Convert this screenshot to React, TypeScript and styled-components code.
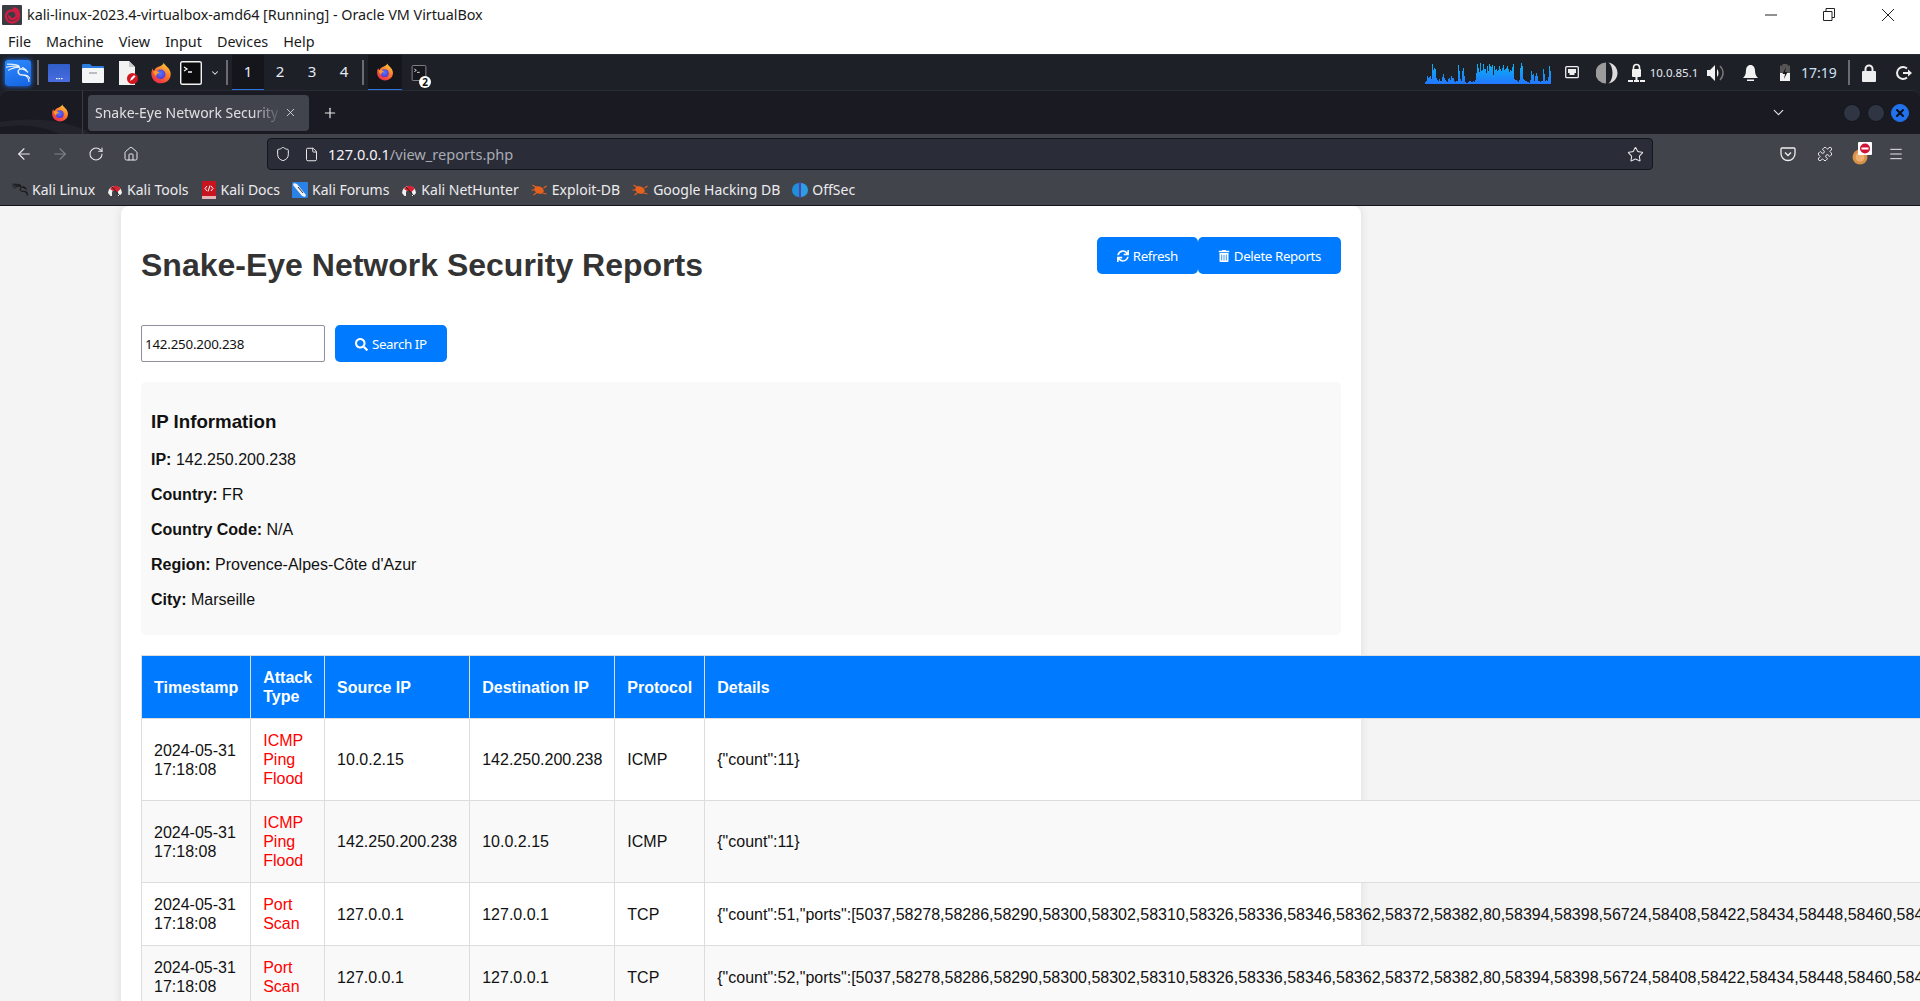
import React, { useId } from "react";
import styled, { createGlobalStyle } from "styled-components";
import { SiKalilinux } from "react-icons/si";
import { FaSync, FaTrashAlt, FaSearch } from "react-icons/fa";
import { ArrowLeft, ArrowRight, RotateCw, Home, Shield, File, Star, Puzzle, ChevronDown, Plus, X, Menu as MenuIcon } from "lucide-react";

const Global = createGlobalStyle`
  html, body { margin: 0; padding: 0; background: #f4f4f4; }
  * { box-sizing: border-box; }
`;

const uiFont = `"Noto Sans", "Open Sans", sans-serif`;
const pageFont = `"Liberation Sans", Arial, sans-serif`;

const Screen = styled.div`
  width: 1920px; height: 1001px; overflow: hidden;
  display: flex; flex-direction: column; background: #fff;
`;

const WindowTitle = styled.div`
  height: 29px; flex: none; display: flex; align-items: center; background: #fff;
  padding-left: 2px; font: 14.4px/20px ${uiFont}; color: #1a1a1a;
`;
const TitleText = styled.span`margin-left: 5px; letter-spacing: -0.05px;`;
const WinButton = styled.span<{ $ml?: number; $mr?: number }>`
  display: flex; width: 14px; height: 14px; align-items: center; justify-content: center;
  margin-left: ${p => p.$ml ?? 0}px; margin-right: ${p => p.$mr ?? 0}px;
`;
const WinControls = styled.div`margin-left: auto; display: flex; align-items: center;`;

const MenuBar = styled.div`
  height: 25px; flex: none; display: flex; align-items: center; gap: 15px; padding: 0 0 0 8px;
  background: #fff; font: 14.4px/20px ${uiFont}; color: #1a1a1a;
`;

const Panel = styled.div`
  height: 36px; flex: none; display: flex; align-items: center; background: #1e2028;
  color: #e6e8ee; font-family: ${uiFont}; border-top: 1px solid #2a2c33;
`;
const PanelItem = styled.div<{ $w: number; $ml?: number }>`
  flex: none; width: ${p => p.$w}px; margin-left: ${p => p.$ml ?? 0}px;
  display: flex; align-items: center; justify-content: center; position: relative;
`;
const PanelSep = styled.div<{ $ml: number }>`
  flex: none; width: 2px; height: 25px; background: #6a6c72; margin-left: ${p => p.$ml}px;
`;
const KaliTile = styled.div`
  width: 26px; height: 26px; border-radius: 3px; color: #fff;
  background: linear-gradient(160deg, #2f8bff, #1463e0);
  box-shadow: 0 0 5px #2176ff; display: flex; align-items: center; justify-content: center;
`;
const Workspace = styled.div<{ $active?: boolean }>`
  flex: none; width: 32px; height: 36px; display: flex; align-items: center; justify-content: center;
  font-size: 15px; color: #e4ebf5; padding-bottom: 2px;
  background: ${p => (p.$active ? "#14161c" : "transparent")};
  border-bottom: 2px solid ${p => (p.$active ? "#2b74e0" : "transparent")};
`;
const TaskButton = styled.div<{ $ml: number }>`
  flex: none; width: 34px; height: 36px; margin-left: ${p => p.$ml}px; display: flex; align-items: center; justify-content: center;
  background: #14161c; border-bottom: 2px solid #2b74e0;
`;
const Badge = styled.span`
  position: absolute; right: -4px; bottom: -7px; width: 12px; height: 12px; border-radius: 50%;
  background: #fff; color: #111; font: 700 10px/12px ${uiFont}; text-align: center;
`;
const PanelRight = styled.div`margin-left: auto; display: flex; align-items: center; padding-right: 8px;`;
const PanelText = styled.span<{ $size: number; $w: number; $ml: number; $color?: string }>`
  flex: none; font-size: ${p => p.$size}px; width: ${p => p.$w}px; margin-left: ${p => p.$ml}px;
  color: ${p => p.$color ?? "#e6e8ee"}; white-space: nowrap; text-align: center;
`;

const Browser = styled.div`flex: none; background: #1e2028;`;
const TabStrip = styled.div`
  height: 44px; display: flex; align-items: center; position: relative; overflow: hidden;
  background: #1a1b22; border-radius: 8px 8px 0 0; border-top: 1px solid #2a2c33; color: #e8e8ea;
  font-family: ${uiFont};
`;
const TabSwoosh = styled.svg`position: absolute; left: 0; bottom: 0;`;
const PinnedIcon = styled.div`margin-left: 51px; width: 18px; height: 18px; display: flex; position: relative;`;
const TabDivider = styled.div`width: 1px; height: 44px; background: #3a3b42; margin-left: 13px; position: relative;`;
const Tab = styled.div`
  width: 221px; height: 36px; margin-left: 5px; border-radius: 4px; background: #42444d;
  display: flex; align-items: center; padding-left: 7px; font-size: 14px; color: #e0e0e3; position: relative;
`;
const TabLabel = styled.span`
  width: 191px; overflow: hidden; white-space: nowrap;
  -webkit-mask-image: linear-gradient(to right, #000 82%, transparent 98%);
  mask-image: linear-gradient(to right, #000 82%, transparent 98%);
`;
const PlainIcon = styled.span<{ $ml?: number; $color?: string }>`
  display: flex; margin-left: ${p => p.$ml ?? 0}px; color: ${p => p.$color ?? "#e8e8ea"}; flex: none; position: relative;
`;
const StarSlot = styled.span`display: flex; margin-left: auto; color: #e8e8ea;`;
const WindowDot = styled.span<{ $ml: number; $blue?: boolean }>`
  width: 18px; height: 18px; border-radius: 50%; margin-left: ${p => p.$ml}px; flex: none;
  background: ${p => (p.$blue ? "#2272ee" : "#2f3543")}; border: 1px solid ${p => (p.$blue ? "#2272ee" : "#14161c")};
  display: flex; align-items: center; justify-content: center; color: #0b0f18;
`;
const NavBar = styled.div`
  height: 44px; display: flex; align-items: center; background: #42444c; padding-bottom: 4px;
  font-family: ${uiFont}; color: #f0f0f2;
`;
const UrlBox = styled.div`
  margin-left: 128px; width: 1386px; height: 32px; flex: none; display: flex; align-items: center;
  background: #2a2c38; border: 1px solid #15161b; border-radius: 4px; padding: 0 8px 0 7px; font-size: 14.6px;
`;
const UrlHost = styled.span`color: #f4f4f6; margin-left: 9px;`;
const UrlPath = styled.span`color: #a9abb3;`;
const BookmarkBar = styled.div`
  height: 28px; display: flex; align-items: center; gap: 12px; padding: 0 0 3px 12px; background: #42444c;
  border-bottom: 1px solid #14151a; font: 14px/20px ${uiFont}; color: #ececee;
`;
const Bookmark = styled.div`display: flex; align-items: center; gap: 4px; white-space: nowrap;`;

const Viewport = styled.main`flex: 1; min-height: 0; overflow: hidden; background: #f4f4f4;`;
const Card = styled.div`
  width: 1240px; margin-left: 121px; min-height: 900px; padding: 20px; background: #fff;
  border-radius: 8px; box-shadow: 0 0 10px rgba(0,0,0,.1);
  font: 16px/19px ${pageFont}; color: #111;
`;
const Header = styled.header`display: flex; justify-content: space-between; align-items: flex-start; height: 79px;`;
const Title = styled.h1`margin: 0; padding-top: 21px; font: 700 32px/37px ${pageFont}; color: #333;`;
const HeaderActions = styled.div`display: flex; margin-top: 11px;`;
const Button = styled.button`
  height: 37px; padding: 1px 20px 0; border: none; border-radius: 5px; background: #007bff; color: #fff;
  font: 13.33px/17px ${uiFont}; letter-spacing: -0.4px; display: inline-flex; align-items: center; gap: 4px; white-space: nowrap;
`;
const SearchRow = styled.form`display: flex; gap: 10px; margin-top: 20px;`;
const SearchInput = styled.input`
  width: 184px; height: 37px; padding: 2px 3px; border: 1px solid #8f8f9d; border-radius: 2px;
  font: 13.33px ${uiFont}; letter-spacing: -0.2px; color: #111; background: #fff;
`;
const InfoBox = styled.section`margin-top: 20px; padding: 10px; background: #f9f9f9; border-radius: 5px;`;
const InfoTitle = styled.h3`margin: 18.7px 0 17.7px; font: 700 18.72px/22px ${pageFont}; color: #111;`;
const InfoLine = styled.p`margin: 16px 0; `;
const ReportTable = styled.table`
  width: 100%; margin-top: 20px; border-collapse: collapse;
  th, td { padding: 12px; border: 1px solid #ddd; text-align: left; }
  th { background: #007bff; color: #fff; font-weight: 700; }
  tbody tr:nth-child(even) { background: #f9f9f9; }
`;
const AttackCell = styled.td`color: #f00;`;
const DetailsCell = styled.td`white-space: nowrap;`;

const FirefoxIcon = ({ size = 22 }: { size?: number }) => {
  const id = useId();
  return (
    <svg width={size} height={size} viewBox="0 0 32 32">
      <defs>
        <linearGradient id={id + "a"} x1="0.8" y1="0" x2="0.2" y2="1">
          <stop offset="0" stopColor="#ffd23f" />
          <stop offset="0.45" stopColor="#ff7a2b" />
          <stop offset="1" stopColor="#e8244f" />
        </linearGradient>
        <radialGradient id={id + "b"} cx="0.45" cy="0.4" r="0.7">
          <stop offset="0" stopColor="#4f7dff" />
          <stop offset="1" stopColor="#5a2bc8" />
        </radialGradient>
      </defs>
      <path d="M20 1c1 4 9 7 10 15 1 9-6 15-14 15C8 31 2 25 2 17c0-3 1-6 2-8 0 2 1 3 2 4 1-3 3-5 6-6 4-1 7-3 8-6z" fill={`url(#${id}a)`} />
      <circle cx="15.5" cy="18" r="7" fill={`url(#${id}b)`} />
      <path d="M5 13c3-1 7 0 9 3-3 0-5 2-5 5-2-2-4-5-4-8z" fill="#ff9a2b" />
    </svg>
  );
};

const VBoxIcon = () => (
  <svg width="20" height="20" viewBox="0 0 20 20">
    <rect width="20" height="20" rx="1" fill="#3a3d44" />
    <path d="M11 3.500c4 0 6 3 6 7s-3 7-7 7-6-3-6-6.500S7 5 10.500 5.500s4.500 3 4 5.500-3 3.500-5 3-2.500-2-2-3.500" fill="none" stroke="#d01d44" strokeWidth="2.400" />
  </svg>
);

const BlueTile = () => (
  <svg width="22" height="18" viewBox="0 0 22 18">
    <defs><linearGradient id="bt" x1="0" y1="0" x2="0" y2="1"><stop offset="0" stopColor="#2f5ec9" /><stop offset="1" stopColor="#4a6de0" /></linearGradient></defs>
    <rect width="22" height="18" rx="1" fill="url(#bt)" />
    <rect x="8" y="14" width="1.500" height="1.200" fill="#fff" /><rect x="10.500" y="14" width="1.500" height="1.200" fill="#fff" /><rect x="13" y="14" width="1.500" height="1.200" fill="#fff" />
  </svg>
);
const FolderIcon = () => (
  <svg width="22" height="20" viewBox="0 0 22 20">
    <path d="M0 2a1 1 0 0 1 1-1h7l2 2h11a1 1 0 0 1 1 1v3H0z" fill="#2b7de0" />
    <rect y="5" width="22" height="15" rx="1" fill="#f4f5f6" />
    <rect x="7" y="9" width="8" height="2" fill="#b9bcc2" />
  </svg>
);
const DocIcon = () => (
  <svg width="20" height="24" viewBox="0 0 20 24">
    <path d="M1 0h10l6 6v18H1z" fill="#f2f2f3" />
    <path d="M11 0l6 6h-6z" fill="#c9c9cc" />
    <circle cx="14.500" cy="17.500" r="5.500" fill="#d01722" />
    <path d="M12 20l1-3 3-3 1.500 1.500-3 3z" fill="#fff" />
  </svg>
);
const TerminalIcon = ({ w = 22, h = 24, dark = false }: { w?: number; h?: number; dark?: boolean }) => (
  <svg width={w} height={h} viewBox="0 0 22 24">
    <rect x="0.700" y="0.700" width="20.600" height="22.600" rx="1.500" fill={dark ? "#16171c" : "#0c0c0e"} stroke={dark ? "#8a8c92" : "#f2f2f2"} strokeWidth="1.400" />
    <path d="M4 6l3 2-3 2M8 11h4" fill="none" stroke="#f2f2f2" strokeWidth="1.300" />
  </svg>
);

const graphHeights = [
  2,3,8,6,7,8,5,20,14,16,15,6,4,3,5,3,3,7,10,6,4,3,2,5,6,4,8,6,6,3,2,3,3,19,13,5,3,13,16,8,2,1,1,2,3,3,2,2,3,2,
  4,11,20,16,12,21,13,14,20,15,15,11,18,13,20,18,17,19,9,18,14,15,13,14,18,15,13,16,19,14,15,16,18,15,12,14,13,17,20,5,4,4,3,2,4,16,21,18,5,4,3,3,2,2,0,
  4,13,9,10,3,8,11,8,3,3,2,3,3,15,10,3,4,3,7,18,13,3,1,1,1
];
const NetGraph = () => (
  <svg width="126" height="22" viewBox="0 0 126 22">
    <defs>
      <linearGradient id="ng" gradientUnits="userSpaceOnUse" x1="0" y1="0" x2="0" y2="22">
        <stop offset="0" stopColor="#08b8f0" />
        <stop offset="1" stopColor="#2277ff" />
      </linearGradient>
    </defs>
    {graphHeights.map((h, i) => <rect key={i} x={i} y={22 - h} width="1" height={h} fill="url(#ng)" />)}
    <rect x="0" y="21" width="126" height="1" fill="url(#ng)" />
  </svg>
);
const EtherIcon = () => (
  <svg width="14" height="14" viewBox="0 0 14 14">
    <rect x="0.700" y="0.700" width="12.600" height="11" rx="1" fill="none" stroke="#eee" strokeWidth="1.300" />
    <path d="M3 3h8v4H9.500v2h-5V7H3z" fill="#eee" />
  </svg>
);
const MoonIcon = () => (
  <svg width="22" height="22" viewBox="0 0 22 22">
    <path d="M10 0.500a10.500 10.500 0 0 0 0 21z" fill="#9b9b9b" />
    <path d="M12.500 0.500c5 1 9 5 9 10.500s-4 9.500-9 10.500c2.500-2 4-6 4-10.500s-1.500-8.500-4-10.500z" fill="#dcdcdc" />
  </svg>
);
const NetLockIcon = () => (
  <svg width="17" height="20" viewBox="0 0 17 20">
    <path d="M5.500 7V4.500a3 3 0 0 1 6 0V7" fill="none" stroke="#f2f2f2" strokeWidth="1.600" />
    <rect x="4" y="6" width="9" height="8" rx="1" fill="#f2f2f2" />
    <rect x="7.500" y="14" width="2" height="3" fill="#f2f2f2" />
    <path d="M0 17h5v2H0zM6 17h5v2H6zM12 17h5v2h-5z" fill="#f2f2f2" />
  </svg>
);
const VolumeIcon = () => (
  <svg width="18" height="18" viewBox="0 0 18 18">
    <path d="M0 6h3l5-5v16l-5-5H0z" fill="#f2f2f2" />
    <path d="M10 5c2 2 2 6 0 8z" fill="#f2f2f2" />
    <path d="M13 2c4 4 4 10 0 14" fill="none" stroke="#777" strokeWidth="1.500" />
  </svg>
);
const BellIcon = () => (
  <svg width="15" height="18" viewBox="0 0 15 18">
    <path d="M7.500 1c3 0 4.500 2.500 4.500 5.500 0 4 1.500 6 3 7.500H0c1.500-1.500 3-3.500 3-7.500C3 3.500 4.500 1 7.500 1z" fill="#f2f2f2" />
    <rect x="4" y="15.500" width="7" height="1.500" fill="#f2f2f2" />
  </svg>
);
const BatteryIcon = () => (
  <svg width="10" height="17" viewBox="0 0 10 17">
    <rect x="2.500" y="0" width="5" height="2" fill="#555" />
    <rect x="0" y="1.500" width="10" height="15.500" fill="#555" />
    <rect x="0" y="9" width="10" height="8" fill="#f2f2f2" />
    <path d="M6 3L2.500 10H5l-1 5 3.500-7H5z" fill="#15161b" />
  </svg>
);
const LockIcon = () => (
  <svg width="14" height="18" viewBox="0 0 14 18">
    <path d="M3.500 8V5a3.500 3.500 0 0 1 7 0v3" fill="none" stroke="#eee" strokeWidth="2" />
    <rect y="7" width="14" height="11" rx="1" fill="#eee" />
  </svg>
);
const LogoutIcon = () => (
  <svg width="16" height="16" viewBox="0 0 16 16">
    <path d="M11 3.500A6 6 0 1 0 11 12.500" fill="none" stroke="#eee" strokeWidth="2" />
    <path d="M7 7h5V4.500L16 8l-4 3.500V9H7z" fill="#eee" />
  </svg>
);
const PocketIcon = () => (
  <svg width="16" height="16" viewBox="0 0 16 16">
    <path d="M2 2h12a1 1 0 0 1 1 1v4.500a7 7 0 0 1-14 0V3a1 1 0 0 1 1-1z" fill="none" stroke="#eee" strokeWidth="1.300" />
    <path d="M5 6.500l3 3 3-3" fill="none" stroke="#eee" strokeWidth="1.300" />
  </svg>
);
const AddonIcon = () => (
  <svg width="24" height="24" viewBox="0 0 24 24">
    <circle cx="9" cy="15" r="7.500" fill="#d9924a" />
    <circle cx="9" cy="15" r="4.500" fill="#ecb070" />
    <rect x="7" y="0" width="14" height="13" rx="1" fill="#fff" />
    <circle cx="14" cy="6.500" r="5" fill="#d01338" />
    <rect x="10.500" y="5.500" width="7" height="2" fill="#fff" />
  </svg>
);
const ToolsMark = () => (
  <svg width="16" height="16" viewBox="0 0 16 16">
    <path d="M1 11a7 7 0 0 1 14 0l-2.500 3H11v-3a3 3 0 0 0-6 0v3H3.500z" fill="#f2f2f2" />
    <path d="M3 7a6 6 0 0 1 9-2l1.500 2L10 10.500A3 3 0 0 0 6 9z" fill="#d8232f" />
    <path d="M5 5l8 9" stroke="#1d1f27" strokeWidth="1" />
  </svg>
);
const DocsMark = () => (
  <svg width="16" height="18" viewBox="0 0 16 18">
    <rect x="1" width="14" height="17" rx="1" fill="#c8141f" />
    <rect x="1" y="15" width="14" height="3" fill="#e6b3b6" />
    <path d="M6 5L4 7.500 6 10M10 5l2 2.500L10 10M9 4.500l-2 6" fill="none" stroke="#fff" strokeWidth="1" />
  </svg>
);
const ForumsMark = () => (
  <svg width="16" height="16" viewBox="0 0 16 16">
    <rect width="16" height="16" rx="1" fill="#2a82e6" />
    <path d="M2 1l3 1 9 11-1 2-3-1L1 3z" fill="#f2f2f2" />
    <path d="M6 5l5 6" stroke="#333" strokeWidth="1" />
  </svg>
);
const BugMark = () => (
  <svg width="17" height="14" viewBox="0 0 17 14">
    <ellipse cx="8" cy="7" rx="5" ry="3.500" fill="#e8611c" transform="rotate(25 8 7)" />
    <path d="M1.500 2l5 3M0.500 7h4M2.500 12l4-3M11.500 10l4 1M12.500 5l3-2" stroke="#e8611c" strokeWidth="1.100" />
  </svg>
);
const OffSecMark = () => (
  <svg width="16" height="16" viewBox="0 0 16 16">
    <path d="M7 1A7 7 0 0 0 7 15z" fill="#1e8fd8" />
    <path d="M9 1A7 7 0 0 1 9 15z" fill="#2b9fe6" />
    <path d="M8 0v16" stroke="#5a3fc0" strokeWidth="1.600" />
  </svg>
);

const ports = "5037,58278,58286,58290,58300,58302,58310,58326,58336,58346,58362,58372,58382,80,58394,58398,56724,58408,58422,58434,58448,58460,58476,58480,58496,58500,58514,58520,58536,58544,58550,58566,58572,58580,58596";

const rows = [
  { type: "ICMP Ping Flood", src: "10.0.2.15", dst: "142.250.200.238", proto: "ICMP", details: '{"count":11}' },
  { type: "ICMP Ping Flood", src: "142.250.200.238", dst: "10.0.2.15", proto: "ICMP", details: '{"count":11}' },
  { type: "Port Scan", src: "127.0.0.1", dst: "127.0.0.1", proto: "TCP", details: `{"count":51,"ports":[${ports}]}` },
  { type: "Port Scan", src: "127.0.0.1", dst: "127.0.0.1", proto: "TCP", details: `{"count":52,"ports":[${ports}]}` },
];

const bookmarks: [React.ReactNode, string][] = [
  [<SiKalilinux size={16} color="#111" stroke="#111" strokeWidth={0.5} />, "Kali Linux"],
  [<ToolsMark />, "Kali Tools"],
  [<DocsMark />, "Kali Docs"],
  [<ForumsMark />, "Kali Forums"],
  [<ToolsMark />, "Kali NetHunter"],
  [<BugMark />, "Exploit-DB"],
  [<BugMark />, "Google Hacking DB"],
  [<OffSecMark />, "OffSec"],
];

export default function App() {
  return (
    <Screen>
      <Global />
      <WindowTitle>
        <VBoxIcon />
        <TitleText>kali-linux-2023.4-virtualbox-amd64 [Running] - Oracle VM VirtualBox</TitleText>
        <WinControls>
          <WinButton>
            <svg width="12" height="2" viewBox="0 0 12 2"><path d="M0 1h12" stroke="#222" /></svg>
          </WinButton>
          <WinButton $ml={44}>
            <svg width="12" height="13" viewBox="0 0 12 13"><path d="M0.500 3.500h8.500v9H0.500zM3 3.500V0.500h8.500v9H9" fill="none" stroke="#222" /></svg>
          </WinButton>
          <WinButton $ml={45} $mr={25}>
            <svg width="12" height="12" viewBox="0 0 12 12"><path d="M0 0l12 12M12 0L0 12" stroke="#222" /></svg>
          </WinButton>
        </WinControls>
      </WindowTitle>
      <MenuBar>
        <span>File</span><span>Machine</span><span>View</span><span>Input</span><span>Devices</span><span>Help</span>
      </MenuBar>
      <Panel>
        <PanelItem $w={26} $ml={5}><KaliTile><SiKalilinux size={24} stroke="#fff" strokeWidth={0.6} /></KaliTile></PanelItem>
        <PanelSep $ml={6} />
        <PanelItem $w={22} $ml={9}><BlueTile /></PanelItem>
        <PanelItem $w={22} $ml={12}><FolderIcon /></PanelItem>
        <PanelItem $w={20} $ml={14}><DocIcon /></PanelItem>
        <PanelItem $w={22} $ml={12}><FirefoxIcon /></PanelItem>
        <PanelItem $w={22} $ml={8}><TerminalIcon /></PanelItem>
        <PanelItem $w={10} $ml={8}><ChevronDown size={12} strokeWidth={2.500} color="#e6e8ee" /></PanelItem>
        <PanelSep $ml={6} />
        <PanelItem $w={4} />
        <Workspace $active>1</Workspace>
        <Workspace>2</Workspace>
        <Workspace>3</Workspace>
        <Workspace>4</Workspace>
        <PanelSep $ml={2} />
        <TaskButton $ml={4}><FirefoxIcon size={18} /></TaskButton>
        <PanelItem $w={16} $ml={9}>
          <TerminalIcon w={16} h={16} dark />
          <Badge>2</Badge>
        </PanelItem>
        <PanelRight>
          <NetGraph />
          <PanelItem $w={14} $ml={14}><EtherIcon /></PanelItem>
          <PanelItem $w={22} $ml={17}><MoonIcon /></PanelItem>
          <PanelItem $w={17} $ml={10}><NetLockIcon /></PanelItem>
          <PanelText $size={11.500} $w={50} $ml={4}>10.0.85.1</PanelText>
          <PanelItem $w={18} $ml={8}><VolumeIcon /></PanelItem>
          <PanelItem $w={15} $ml={18}><BellIcon /></PanelItem>
          <PanelItem $w={10} $ml={22}><BatteryIcon /></PanelItem>
          <PanelText $size={14} $w={34} $ml={11} $color="#cfe0f5">17:19</PanelText>
          <PanelSep $ml={13} />
          <PanelItem $w={14} $ml={12}><LockIcon /></PanelItem>
          <PanelItem $w={16} $ml={20}><LogoutIcon /></PanelItem>
        </PanelRight>
      </Panel>
      <Browser>
        <TabStrip>
          <TabSwoosh width="90" height="20" viewBox="0 0 90 20">
            <path d="M0 8c25-4 55-4 85 8l5 4H0z" fill="#23242b" />
            <path d="M0 13c20-3 40-2 60 7H0z" fill="#1a1b22" />
          </TabSwoosh>
          <PinnedIcon><FirefoxIcon size={18} /></PinnedIcon>
          <TabDivider />
          <Tab>
            <TabLabel>Snake-Eye Network Security Reports</TabLabel>
            <PlainIcon $ml={-2}><X size={13} strokeWidth={1.500} /></PlainIcon>
          </Tab>
          <PlainIcon $ml={13}><Plus size={16} strokeWidth={1.800} /></PlainIcon>
          <PlainIcon $ml={1432}><ChevronDown size={17} strokeWidth={1.500} /></PlainIcon>
          <WindowDot $ml={56} />
          <WindowDot $ml={6} />
          <WindowDot $ml={6} $blue><X size={12} strokeWidth={4} /></WindowDot>
        </TabStrip>
        <NavBar>
          <PlainIcon $ml={15}><ArrowLeft size={18} strokeWidth={1.500} /></PlainIcon>
          <PlainIcon $ml={18} $color="#7f8187"><ArrowRight size={18} strokeWidth={1.500} /></PlainIcon>
          <PlainIcon $ml={19}><RotateCw size={16} strokeWidth={1.600} /></PlainIcon>
          <PlainIcon $ml={19}><Home size={16} strokeWidth={1.500} /></PlainIcon>
          <UrlBox>
            <Shield size={16} strokeWidth={1.500} />
            <PlainIcon $ml={13}><File size={15} strokeWidth={1.600} /></PlainIcon>
            <UrlHost>127.0.0.1</UrlHost>
            <UrlPath>/view_reports.php</UrlPath>
            <StarSlot><Star size={17} strokeWidth={1.500} /></StarSlot>
          </UrlBox>
          <PlainIcon $ml={127}><PocketIcon /></PlainIcon>
          <PlainIcon $ml={21}><Puzzle size={16} strokeWidth={1.500} /></PlainIcon>
          <PlainIcon $ml={18}><AddonIcon /></PlainIcon>
          <PlainIcon $ml={13}><MenuIcon size={16} strokeWidth={1.500} /></PlainIcon>
        </NavBar>
        <BookmarkBar>
          {bookmarks.map(([icon, label]) => (
            <Bookmark key={label}>{icon}<span>{label}</span></Bookmark>
          ))}
        </BookmarkBar>
      </Browser>
      <Viewport>
        <Card>
          <Header>
            <Title>Snake-Eye Network Security Reports</Title>
            <HeaderActions>
              <Button type="button"><FaSync size={12} />Refresh</Button>
              <Button type="button"><FaTrashAlt size={12} />Delete Reports</Button>
            </HeaderActions>
          </Header>
          <SearchRow>
            <SearchInput defaultValue="142.250.200.238" />
            <Button type="button"><FaSearch size={13} />Search IP</Button>
          </SearchRow>
          <InfoBox>
            <InfoTitle>IP Information</InfoTitle>
            <InfoLine><strong>IP:</strong> 142.250.200.238</InfoLine>
            <InfoLine><strong>Country:</strong> FR</InfoLine>
            <InfoLine><strong>Country Code:</strong> N/A</InfoLine>
            <InfoLine><strong>Region:</strong> Provence-Alpes-Côte d'Azur</InfoLine>
            <InfoLine><strong>City:</strong> Marseille</InfoLine>
          </InfoBox>
          <ReportTable>
            <thead>
              <tr>
                <th>Timestamp</th><th>Attack Type</th><th>Source IP</th><th>Destination IP</th><th>Protocol</th><th>Details</th>
              </tr>
            </thead>
            <tbody>
              {rows.map((r, i) => (
                <tr key={i}>
                  <td>2024-05-31 17:18:08</td>
                  <AttackCell>{r.type}</AttackCell>
                  <td>{r.src}</td>
                  <td>{r.dst}</td>
                  <td>{r.proto}</td>
                  <DetailsCell>{r.details}</DetailsCell>
                </tr>
              ))}
            </tbody>
          </ReportTable>
        </Card>
      </Viewport>
    </Screen>
  );
}
